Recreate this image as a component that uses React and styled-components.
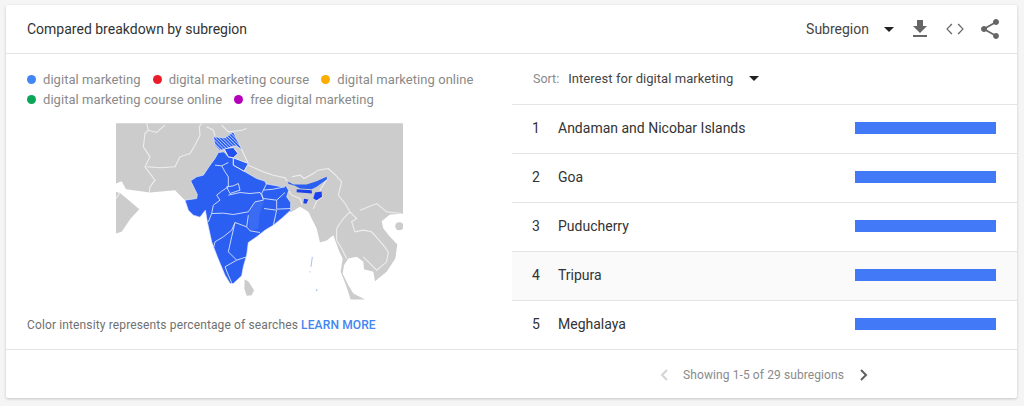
import React from "react";
import styled, { createGlobalStyle } from "styled-components";

const GlobalStyle = createGlobalStyle`
  html, body {
    margin: 0;
    padding: 0;
    background: #f5f5f5;
    font-family: Roboto, "Liberation Sans", sans-serif;
  }
`;

const legend = [
  [
    { color: "#4285f4", label: "digital marketing" },
    { color: "#ea1c2c", label: "digital marketing course" },
    { color: "#fbad00", label: "digital marketing online" },
  ],
  [
    { color: "#0ba55a", label: "digital marketing course online" },
    { color: "#b400b8", label: "free digital marketing" },
  ],
];

const regions = ["Andaman and Nicobar Islands", "Goa", "Puducherry", "Tripura", "Meghalaya"];

// map shapes, drawn in a 861x530 space
const MAINLAND =
  "M48 24 L909 24 L909 296 L870 298 L845 318 L850 340 L870 365 L892 388 L886 430 L860 470 L825 498 L820 470 L792 462 L790 440 L770 425 L745 430 L732 450 L728 475 L745 510 L760 535 L795 553 L752 553 L738 510 L722 470 L728 430 L718 410 L700 360 L680 376 L660 382 L650 340 L625 290 L600 275 L575 290 L500 300 L255 255 L225 225 L150 232 L78 222 L65 198 L48 205 Z";
const OMAN = "M48 230 L62 235 L90 258 L118 282 L92 310 L65 350 L48 355 Z";
const LANKA = "M434 492 L446 500 L462 525 L455 540 L440 542 L433 520 Z";
const INDIA =
  "M355 112 L372 110 L385 125 L400 128 L400 150 L432 168 L470 190 L495 198 L498 206 L545 215 L558 212 L566 226 L560 245 L572 262 L572 285 L545 310 L520 330 L495 345 L470 365 L445 382 L440 420 L430 455 L425 482 L400 505 L390 505 L375 480 L352 425 L335 380 L322 320 L316 285 L300 306 L280 300 L265 285 L255 255 L290 250 L292 238 L272 197 L290 185 L310 180 L330 150 L345 130 Z";
const UTTARAKHAND = "M400 128 L445 145 L432 168 L400 150 Z";
const HIMACHAL = "M372 100 L400 97 L414 115 L400 128 L385 125 Z";
const KASHMIR = "M340 65 L375 68 L400 50 L410 72 L425 102 L405 92 L385 98 L360 106 L345 90 Z";
const CHHATTISGARH = "M465 260 L492 258 L478 300 L475 340 L450 347 L445 300 Z";
const ASSAM =
  "M565 200 L580 208 L620 208 L650 198 L680 185 L681 192 L650 215 L635 222 L600 220 L585 212 L565 206 Z";
const DARK_STATES = [
  "M590 222 L635 225 L636 235 L590 231 Z",
  "M612 251 L625 253 L619 266 L610 264 Z",
  "M645 232 L665 229 L666 245 L650 255 L640 250 Z",
];
const STATE_LINES = [
  "M345 150 L365 152 L385 142",
  "M365 152 L375 170 L385 185 L385 215 L365 228 L350 240 L360 255 L340 270 L335 295",
  "M380 215 L400 212 L415 205 L420 225 L390 235 Z",
  "M335 295 L370 294 L400 298 L445 290 L465 260 L490 255 L485 235 L500 205",
  "M385 240 L420 232 L450 235 L480 232 L490 250 L530 255 L555 232",
  "M490 225 L520 222 L555 215",
  "M530 255 L530 282 L572 280",
  "M492 280 L530 285 L520 330",
  "M335 295 L325 320",
  "M445 300 L440 335 L405 322 L395 345 L370 365 L345 380 L340 400",
  "M405 322 L395 365 L385 410 L410 435 L375 455 L385 480 L395 503",
  "M410 435 L440 425",
  "M440 335 L450 347 L480 352",
];
const BORDER_LINES = [
  "M140 24 L145 45 L135 55 L130 95 L150 125 L135 155 L165 195 L150 215 L148 232",
  "M145 45 L170 52 L195 30",
  "M140 155 L180 158 L225 155 L240 125 L270 115 L285 90 L300 60 L298 35 L305 24",
  "M320 35 L340 45 L345 62",
  "M365 30 L385 50 L400 48 L425 45 L440 40",
  "M425 102 L440 135 L445 147",
  "M445 150 L490 170 L520 180 L555 188 L562 198",
  "M575 185 L600 180 L612 190 L640 175 L655 165 L685 160 L705 178 L725 200 L715 240 L735 265 L750 290",
  "M682 190 L660 225 L666 245 L650 258 L640 282",
  "M566 226 L575 240 L600 250 L606 268",
  "M750 290 L730 310 L710 340 L710 375 L725 400 L740 430",
  "M750 290 L770 310 L755 320 L765 350 L790 345 L815 350 L850 390 L865 410 L860 440 L830 465 L790 425",
  "M780 285 L830 265 L860 290 L905 295",
  "M48 250 L60 232",
];

function IndiaMap() {
  return (
    <MapSvg viewBox="48 24 861 530">
      <defs>
        <pattern id="hatch" width="7" height="7" patternUnits="userSpaceOnUse" patternTransform="rotate(-45)">
          <rect width="7" height="7" fill="#2b5ff2" />
          <rect width="2.2" height="7" fill="#c2d0fa" />
        </pattern>
        <filter id="soft" x="0" y="0" width="1" height="1">
          <feGaussianBlur stdDeviation="1.4" />
        </filter>
      </defs>
      <g filter="url(#soft)">
        <path d={MAINLAND} fill="#cccccc" />
        <path d={OMAN} fill="#cccccc" />
        <path d={LANKA} fill="#cccccc" />
        <circle cx="898" cy="333" r="12" fill="#cccccc" />
        {BORDER_LINES.map((d) => (
          <path key={d} d={d} fill="none" stroke="#eeeeee" strokeWidth="3.2" />
        ))}
        <path d={INDIA} fill="#2b5ff2" stroke="#e6ecfd" strokeWidth="2" />
        <path d={CHHATTISGARH} fill="#3a6bf3" />
        {STATE_LINES.map((d) => (
          <path key={d} d={d} fill="none" stroke="#d5dffc" strokeWidth="2.8" />
        ))}
        <path d={UTTARAKHAND} fill="#2b5ff2" stroke="#e6ecfd" strokeWidth="3" />
        <path d={HIMACHAL} fill="#2451ef" stroke="#e6ecfd" strokeWidth="3" />
        <path d={KASHMIR} fill="url(#hatch)" stroke="#e6ecfd" strokeWidth="2" />
        <path d={ASSAM} fill="#2b5ff2" />
        {DARK_STATES.map((d) => (
          <path key={d} d={d} fill="#1f3fea" />
        ))}
        <path d="M637 425 L633 455" stroke="#a9bdf8" strokeWidth="3" />
        <circle cx="630" cy="470" r="2" fill="#a9bdf8" />
        <circle cx="650" cy="525" r="2.5" fill="#a9bdf8" />
      </g>
    </MapSvg>
  );
}

function Caret() {
  return (
    <CaretSvg viewBox="0 0 10 5">
      <path d="M0 0h10L5 5z" fill="#212121" />
    </CaretSvg>
  );
}

function ChevronIcon({ dir, color }) {
  return (
    <ChevronSvg viewBox="0 0 8 12">
      <path
        d={dir === "left" ? "M7 1L2 6l5 5" : "M1 1l5 5-5 5"}
        fill="none"
        stroke={color}
        strokeWidth="2"
      />
    </ChevronSvg>
  );
}

export default function App() {
  return (
    <Page>
      <GlobalStyle />
      <Card>
        <Header>
          <Title>Compared breakdown by subregion</Title>
          <Tools>
            <Picker>Subregion</Picker>
            <Caret />
            <DownloadIcon viewBox="0 0 24 24">
              <path d="M19 9h-4V3H9v6H5l7 7 7-7zM5 18v2h14v-2H5z" />
            </DownloadIcon>
            <ToolIcon viewBox="0 0 24 24">
              <path d="M9.4 16.6L4.8 12l4.6-4.6L8.4 6.4 3.2 12l5.2 5.6 1-1zm5.2 0l4.6-4.6-4.6-4.6 1-1 5.2 5.6-5.2 5.6-1-1z" />
            </ToolIcon>
            <ToolIcon viewBox="0 0 24 24">
              <path d="M18 16.08c-.76 0-1.44.3-1.96.77L8.91 12.7c.05-.23.09-.46.09-.7s-.04-.47-.09-.7l7.05-4.11c.54.5 1.25.81 2.04.81 1.66 0 3-1.34 3-3s-1.34-3-3-3-3 1.34-3 3c0 .24.04.47.09.7L8.04 9.81C7.5 9.31 6.79 9 6 9c-1.66 0-3 1.34-3 3s1.34 3 3 3c.79 0 1.5-.31 2.04-.81l7.12 4.16c-.05.21-.08.43-.08.65 0 1.61 1.31 2.92 2.92 2.92 1.61 0 2.92-1.31 2.92-2.92s-1.31-2.92-2.92-2.92z" />
            </ToolIcon>
          </Tools>
        </Header>
        <Body>
          <LeftPanel>
            <Legend>
              {legend.map((line, i) => (
                <LegendLine key={i}>
                  {line.map((item) => (
                    <LegendItem key={item.label}>
                      <Dot $color={item.color} />
                      {item.label}
                    </LegendItem>
                  ))}
                </LegendLine>
              ))}
            </Legend>
            <IndiaMap />
            <Note>
              Color intensity represents percentage of searches <LearnMore>LEARN MORE</LearnMore>
            </Note>
          </LeftPanel>
          <RightPanel>
            <SortBar>
              <SortLabel>Sort:</SortLabel>
              <SortValue>Interest for digital marketing</SortValue>
              <Caret />
            </SortBar>
            {regions.map((name, i) => (
              <Row key={name} $hover={i === 3}>
                <Rank>{i + 1}</Rank>
                <Name>{name}</Name>
                <Bar />
              </Row>
            ))}
          </RightPanel>
        </Body>
        <Footer>
          <ChevronIcon dir="left" color="#d4d4d4" />
          <Showing>Showing 1-5 of 29 subregions</Showing>
          <ChevronIcon dir="right" color="#5f5f5f" />
        </Footer>
      </Card>
    </Page>
  );
}

const Page = styled.div`
  width: 1024px;
  height: 406px;
  padding: 5px 7px 8px 6px;
  box-sizing: border-box;
  overflow: hidden;
`;

const Card = styled.div`
  height: 393px;
  background: #fff;
  border-radius: 2px;
  box-shadow: 0 1px 3px rgba(0, 0, 0, 0.2);
  display: flex;
  flex-direction: column;
`;

const Header = styled.div`
  height: 49px;
  flex: none;
  box-sizing: border-box;
  display: flex;
  align-items: center;
  justify-content: space-between;
  padding: 0 15px 0 21px;
  border-bottom: 1px solid #e4e4e4;
`;

const Title = styled.div`
  font-size: 14px;
  color: #333;
`;

const Tools = styled.div`
  display: flex;
  align-items: center;
`;

const Picker = styled.div`
  font-size: 14px;
  color: #444;
  margin-right: 15px;
`;

const CaretSvg = styled.svg`
  width: 10px;
  height: 5px;
  flex: none;
`;

const ToolIcon = styled.svg`
  width: 24px;
  height: 24px;
  margin-left: 11px;
  fill: #666;
`;

const DownloadIcon = styled(ToolIcon)`
  margin-left: 14px;
`;

const Body = styled.div`
  height: 295px;
  flex: none;
  display: grid;
  grid-template-columns: 506px 1fr;
`;

const LeftPanel = styled.div`
  display: flex;
  flex-direction: column;
  padding: 17px 0 0 21px;
`;

const Legend = styled.div`
  display: flex;
  flex-direction: column;
  gap: 3px;
`;

const LegendLine = styled.div`
  display: flex;
  gap: 12px;
  height: 17px;
  align-items: center;
`;

const LegendItem = styled.div`
  display: flex;
  align-items: center;
  gap: 7px;
  font-size: 13px;
  letter-spacing: 0.05px;
  color: #8a8a8a;
`;

const Dot = styled.span`
  width: 9px;
  height: 9px;
  border-radius: 50%;
  background: ${(p) => p.$color};
`;

const MapSvg = styled.svg`
  width: 287px;
  height: 177px;
  margin: 15px 0 0 89px;
  display: block;
`;

const Note = styled.div`
  margin-top: 18px;
  font-size: 12px;
  letter-spacing: 0.13px;
  color: #707070;
`;

const LearnMore = styled.span`
  color: #4285f4;
  font-weight: 500;
`;

const RightPanel = styled.div`
  display: flex;
  flex-direction: column;
`;

const SortBar = styled.div`
  height: 51px;
  flex: none;
  box-sizing: border-box;
  display: flex;
  align-items: center;
  padding: 0 0 1px 21px;
  border-bottom: 1px solid #e4e4e4;
`;

const SortLabel = styled.span`
  font-size: 12.5px;
  color: #8a8a8a;
  margin-right: 9px;
`;

const SortValue = styled.span`
  font-size: 13px;
  letter-spacing: 0.05px;
  color: #444;
  margin-right: 16px;
`;

const Row = styled.div`
  height: 49px;
  flex: none;
  box-sizing: border-box;
  display: flex;
  align-items: center;
  padding: 0 21px 2px 20px;
  background: ${(p) => (p.$hover ? "#fafafa" : "#fff")};
  border-bottom: 1px solid #e4e4e4;

  &:last-child {
    border-bottom: none;
    padding-bottom: 3px;
  }
`;

const Rank = styled.span`
  width: 26px;
  font-size: 14px;
  color: #333;
`;

const Name = styled.span`
  flex: 1;
  font-size: 14px;
  color: #333;
`;

const Bar = styled.div`
  width: 141px;
  height: 12px;
  background: #4279f6;
`;

const Footer = styled.div`
  height: 49px;
  flex: none;
  display: flex;
  align-items: center;
  padding: 1px 0 0 654px;
  border-top: 1px solid #e4e4e4;
  box-sizing: border-box;
`;

const ChevronSvg = styled.svg`
  width: 8px;
  height: 12px;
  flex: none;
`;

const Showing = styled.span`
  font-size: 12px;
  letter-spacing: 0.1px;
  color: #8a8a8a;
  margin: 0 16px 0 15px;
`;
